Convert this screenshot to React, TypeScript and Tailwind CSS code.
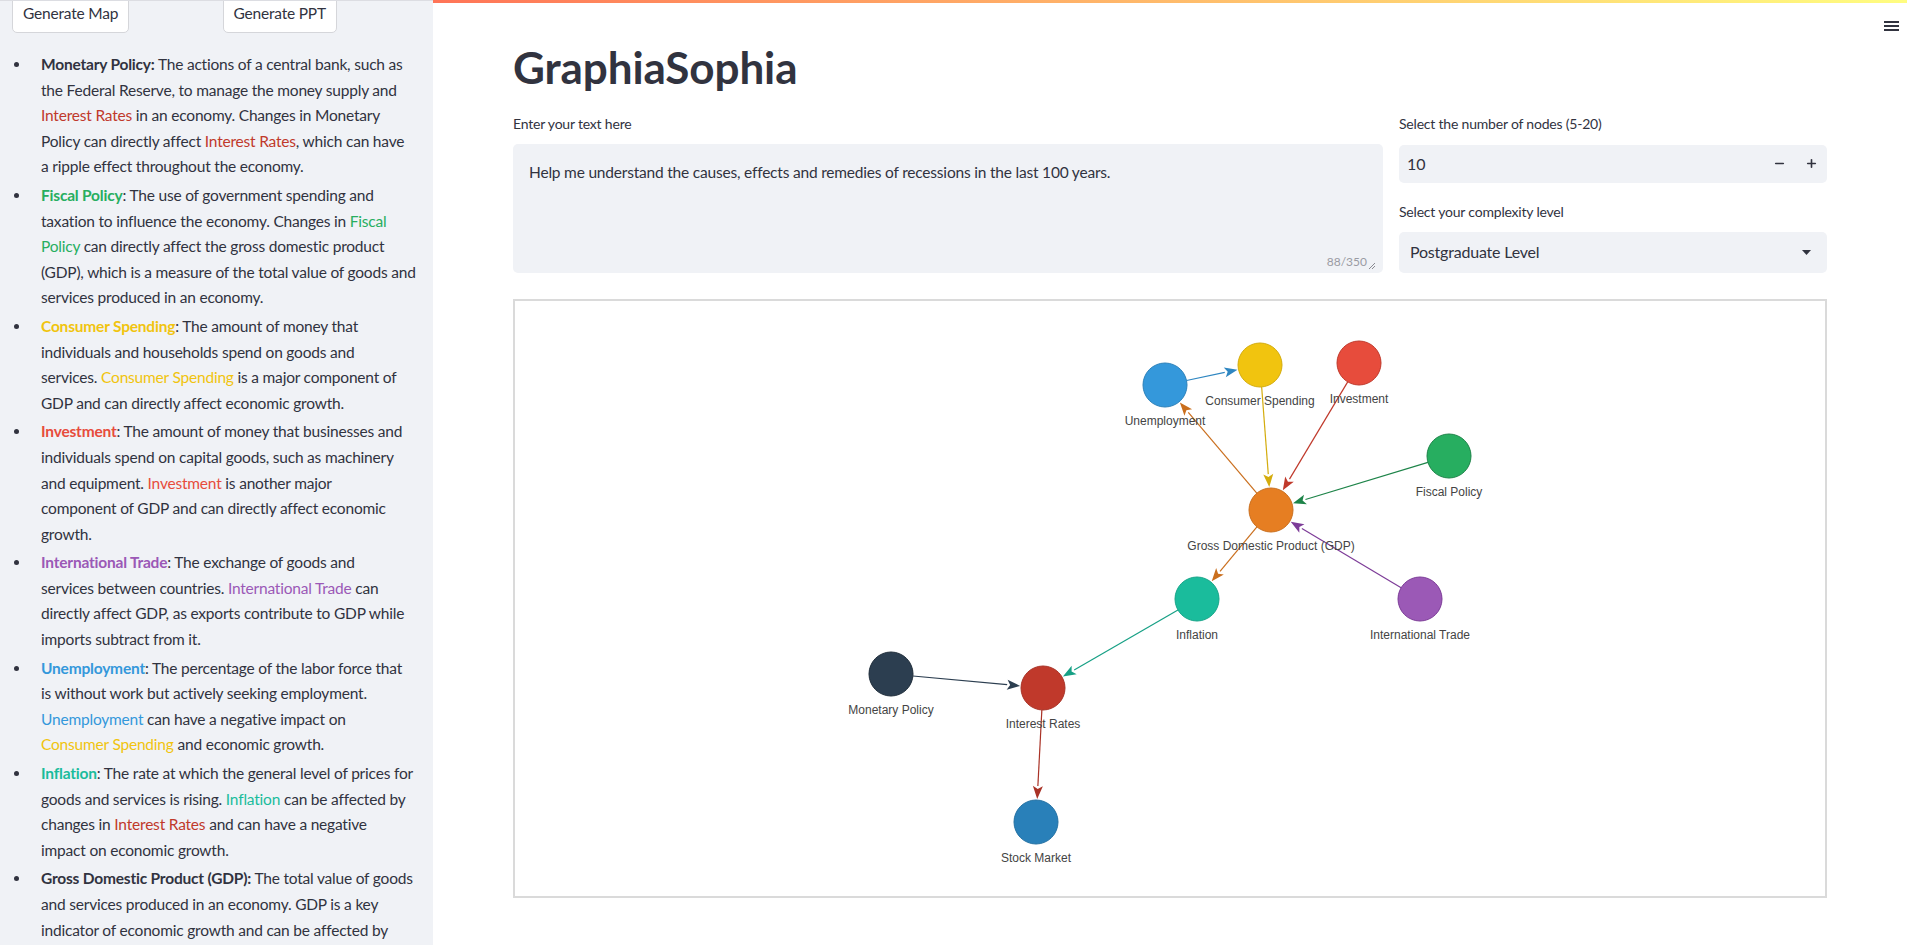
import { Minus, Plus } from "lucide-react";

const RED = "text-[#c0392b]";
const GREEN = "text-[#27ae60]";
const YELLOW = "text-[#f1c40f]";
const ORANGE_RED = "text-[#e74c3c]";
const PURPLE = "text-[#9b59b6]";
const BLUE = "text-[#3498db]";
const TEAL = "text-[#1abc9c]";

const nodes = [
  { id: "unemp", label: "Unemployment", x: 650, y: 84, fill: "#3498db", stroke: "#2c81ba" },
  { id: "cs", label: "Consumer Spending", x: 745, y: 64, fill: "#f1c40f", stroke: "#d4ac0d" },
  { id: "inv", label: "Investment", x: 844, y: 62, fill: "#e74c3c", stroke: "#c0392b" },
  { id: "fiscal", label: "Fiscal Policy", x: 934, y: 155, fill: "#27ae60", stroke: "#1e8449" },
  { id: "gdp", label: "Gross Domestic Product (GDP)", x: 756, y: 209, fill: "#e67e22", stroke: "#ca6f1e" },
  { id: "infl", label: "Inflation", x: 682, y: 298, fill: "#1abc9c", stroke: "#17a589" },
  { id: "trade", label: "International Trade", x: 905, y: 298, fill: "#9b59b6", stroke: "#7d3c98" },
  { id: "mon", label: "Monetary Policy", x: 376, y: 373, fill: "#2c3e50", stroke: "#1f2d3a" },
  { id: "ir", label: "Interest Rates", x: 528, y: 387, fill: "#c0392b", stroke: "#a93226" },
  { id: "stock", label: "Stock Market", x: 521, y: 521, fill: "#2980b9", stroke: "#2471a3" },
];

const edges = [
  { from: "unemp", to: "cs", color: "#2e86c1" },
  { from: "cs", to: "gdp", color: "#d4ac0d" },
  { from: "inv", to: "gdp", color: "#c0392b" },
  { from: "fiscal", to: "gdp", color: "#1e8449" },
  { from: "gdp", to: "unemp", color: "#ca6f1e" },
  { from: "trade", to: "gdp", color: "#7d3c98" },
  { from: "gdp", to: "infl", color: "#ca6f1e" },
  { from: "infl", to: "ir", color: "#16a085" },
  { from: "mon", to: "ir", color: "#2c3e50" },
  { from: "ir", to: "stock", color: "#a93226" },
];

const R = 22;

const Graph = () => {
  const byId = Object.fromEntries(nodes.map((n) => [n.id, n]));
  return (
    <svg width="100%" height="100%">
      {edges.map((e) => {
        const a = byId[e.from];
        const b = byId[e.to];
        const dx = b.x - a.x;
        const dy = b.y - a.y;
        const len = Math.sqrt(dx * dx + dy * dy);
        const ux = dx / len;
        const uy = dy / len;
        const sx = a.x + ux * R;
        const sy = a.y + uy * R;
        const tx = b.x - ux * (R + 1);
        const ty = b.y - uy * (R + 1);
        const bx = tx - ux * 13;
        const by = ty - uy * 13;
        const px = -uy * 5;
        const py = ux * 5;
        return (
          <g key={e.from + e.to}>
            <line x1={sx} y1={sy} x2={bx} y2={by} stroke={e.color} strokeWidth={1.2} />
            <polygon
              points={`${tx},${ty} ${bx + px},${by + py} ${bx + ux * 3},${by + uy * 3} ${bx - px},${by - py}`}
              fill={e.color}
            />
          </g>
        );
      })}
      {nodes.map((n) => (
        <g key={n.id}>
          <circle cx={n.x} cy={n.y} r={R} fill={n.fill} stroke={n.stroke} strokeWidth={1} />
          <text
            x={n.x}
            y={n.y + 40}
            textAnchor="middle"
            fontSize={12}
            fill="#444"
            fontFamily="'Liberation Sans', Arial, sans-serif"
          >
            {n.label}
          </text>
        </g>
      ))}
    </svg>
  );
};

const Item = ({ children }: { children: React.ReactNode }) => (
  <li className="flex">
    <div className="w-[29px] shrink-0 pt-[10px] pl-[2px]">
      <div className="w-[5px] h-[5px] rounded-full bg-[#31333f]"></div>
    </div>
    <div className="w-[382px] whitespace-nowrap">{children}</div>
  </li>
);

const App = () => {
  return (
    <div className="flex w-full h-[945px] overflow-hidden bg-white text-[#31333f] font-['Lato',sans-serif]">
      <aside className="w-[433px] shrink-0 h-full bg-[#f0f2f6] border-t border-[#dcdde2] overflow-hidden px-3">
        <div className="grid grid-cols-2 gap-3 -mt-[6px]">
          <div>
            <button className="h-[38px] px-[10px] bg-white border border-[#d5d6da] rounded-[5px] text-[15.5px] tracking-[-0.2px] text-[#31333f]">
              Generate Map
            </button>
          </div>
          <div>
            <button className="h-[38px] px-[10px] bg-white border border-[#d5d6da] rounded-[5px] text-[15.5px] tracking-[-0.2px] text-[#31333f]">
              Generate PPT
            </button>
          </div>
        </div>
        <ul className="mt-[19px] flex flex-col gap-[3px] text-[15.5px] tracking-[-0.2px] leading-[25.6px]">
          <Item>
            <b>Monetary Policy:</b> The actions of a central bank, such as
            <br />
            the Federal Reserve, to manage the money supply and
            <br />
            <span className={RED}>Interest Rates</span> in an economy. Changes in Monetary
            <br />
            Policy can directly affect <span className={RED}>Interest Rates</span>, which can have
            <br />
            a ripple effect throughout the economy.
          </Item>
          <Item>
            <b className={GREEN}>Fiscal Policy</b>: The use of government spending and
            <br />
            taxation to influence the economy. Changes in <span className={GREEN}>Fiscal</span>
            <br />
            <span className={GREEN}>Policy</span> can directly affect the gross domestic product
            <br />
            (GDP), which is a measure of the total value of goods and
            <br />
            services produced in an economy.
          </Item>
          <Item>
            <b className={YELLOW}>Consumer Spending</b>: The amount of money that
            <br />
            individuals and households spend on goods and
            <br />
            services. <span className={YELLOW}>Consumer Spending</span> is a major component of
            <br />
            GDP and can directly affect economic growth.
          </Item>
          <Item>
            <b className={ORANGE_RED}>Investment</b>: The amount of money that businesses and
            <br />
            individuals spend on capital goods, such as machinery
            <br />
            and equipment. <span className={ORANGE_RED}>Investment</span> is another major
            <br />
            component of GDP and can directly affect economic
            <br />
            growth.
          </Item>
          <Item>
            <b className={PURPLE}>International Trade</b>: The exchange of goods and
            <br />
            services between countries. <span className={PURPLE}>International Trade</span> can
            <br />
            directly affect GDP, as exports contribute to GDP while
            <br />
            imports subtract from it.
          </Item>
          <Item>
            <b className={BLUE}>Unemployment</b>: The percentage of the labor force that
            <br />
            is without work but actively seeking employment.
            <br />
            <span className={BLUE}>Unemployment</span> can have a negative impact on
            <br />
            <span className={YELLOW}>Consumer Spending</span> and economic growth.
          </Item>
          <Item>
            <b className={TEAL}>Inflation</b>: The rate at which the general level of prices for
            <br />
            goods and services is rising. <span className={TEAL}>Inflation</span> can be affected by
            <br />
            changes in <span className={RED}>Interest Rates</span> and can have a negative
            <br />
            impact on economic growth.
          </Item>
          <Item>
            <b>Gross Domestic Product (GDP):</b> The total value of goods
            <br />
            and services produced in an economy. GDP is a key
            <br />
            indicator of economic growth and can be affected by
            <br />
            changes in Fiscal Policy, Consumer Spending,
            <br />
            Investment and International Trade.
          </Item>
        </ul>
      </aside>

      <main className="relative flex-1 min-w-0 flex flex-col">
        <div className="h-[3px] w-full bg-gradient-to-r from-[#ff7457] to-[#fffd80]"></div>
        <div className="absolute top-[21px] right-[8px] flex flex-col gap-[2px]">
          <div className="w-[15px] h-[2px] bg-[#31333f]"></div>
          <div className="w-[15px] h-[2px] bg-[#31333f]"></div>
          <div className="w-[15px] h-[2px] bg-[#31333f]"></div>
        </div>
        <div className="px-[80px]">
          <h1 className="mt-[38px] text-[44px] leading-[1.2] font-bold tracking-[-0.1px]">GraphiaSophia</h1>
          <div className="mt-[20px] grid grid-cols-[870px_1fr] gap-4">
            <div>
              <div className="h-[20px] text-[14px] tracking-[-0.2px] leading-[20px] mb-[10px]">Enter your text here</div>
              <div className="relative h-[129px] bg-[#f0f2f6] rounded-[5px] px-4 pt-4 text-[15.5px] tracking-[-0.2px] leading-[1.6]">
                Help me understand the causes, effects and remedies of recessions in the last 100 years.
                <div className="absolute right-[7px] bottom-[2px] flex items-end gap-[1px] text-[12px] tracking-normal text-[#9a9ba3]">
                  88/350
                  <svg width="8" height="8" viewBox="0 0 8 8" className="mb-[1px]">
                    <path d="M7 1 L1 7 M7 4 L4 7" stroke="#8a8b92" strokeWidth="1" />
                  </svg>
                </div>
              </div>
            </div>
            <div>
              <div className="h-[20px] text-[14px] tracking-[-0.2px] leading-[20px] mb-[11px]">Select the number of nodes (5-20)</div>
              <div className="h-[38px] bg-[#f0f2f6] rounded-[5px] flex items-center">
                <div className="flex-1 pl-2 text-[16px]">10</div>
                <div className="w-8 h-full flex items-center justify-center">
                  <Minus size={13} strokeWidth={3} />
                </div>
                <div className="w-8 h-full flex items-center justify-center">
                  <Plus size={13} strokeWidth={3} />
                </div>
              </div>
              <div className="mt-[19px] h-[20px] text-[14px] tracking-[-0.2px] leading-[20px] mb-[10px]">Select your complexity level</div>
              <div className="h-[41px] bg-[#f0f2f6] rounded-[5px] flex items-center justify-between pl-[11px] pr-[16px]">
                <span className="text-[16px] tracking-[-0.2px]">Postgraduate Level</span>
                <svg width="9" height="5" viewBox="0 0 9 5">
                  <path d="M0 0 L9 0 L4.5 5 Z" fill="#31333f" />
                </svg>
              </div>
            </div>
          </div>
          <div className="mt-[26px] h-[599px] border-2 border-[#dadada] bg-white">
            <Graph />
          </div>
        </div>
      </main>
    </div>
  );
};

export default App;
